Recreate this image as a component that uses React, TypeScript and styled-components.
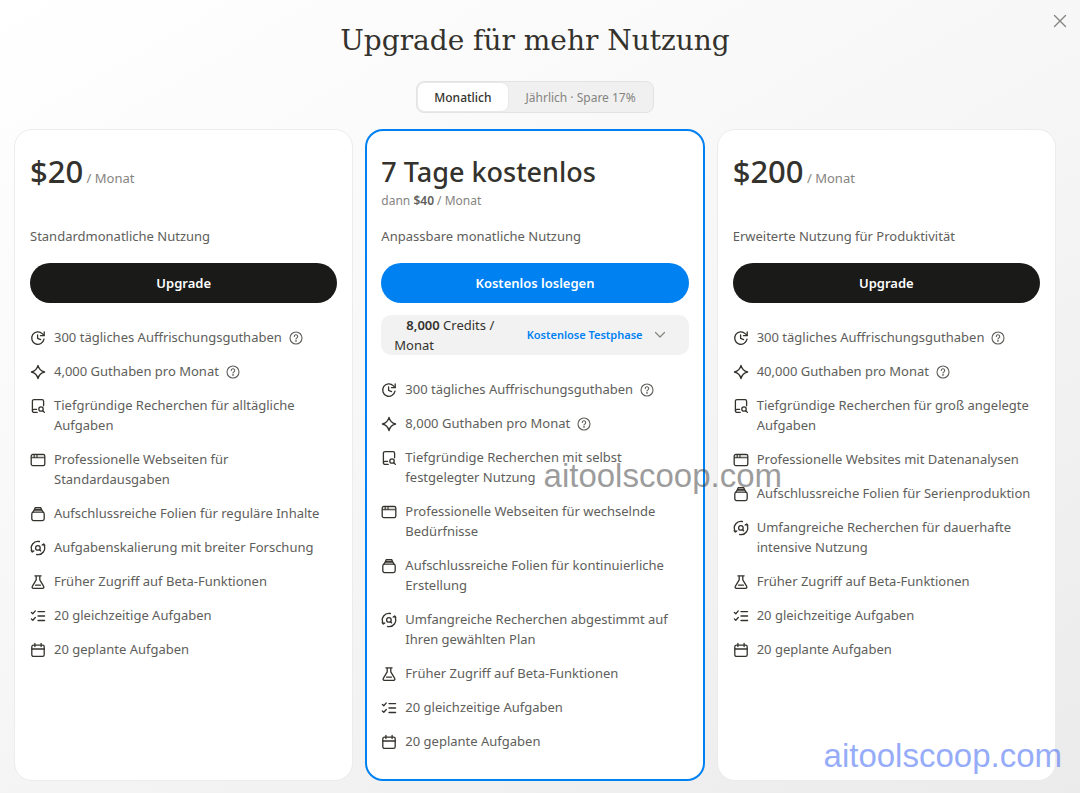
import React, { useState } from "react";
import styled, { createGlobalStyle } from "styled-components";

const GlobalStyle = createGlobalStyle`
  *, *::before, *::after { box-sizing: border-box; }
  html { height: 100%; }
  body {
    margin: 0;
    min-height: 100%;
    background: linear-gradient(150deg, #ffffff 0%, #f7f7f7 45%, #ebebeb 100%);
    color: #34322d;
    font-family: "Noto Sans", "Open Sans", sans-serif;
    font-size: 13px;
    line-height: 20px;
  }
  button, select { font: inherit; cursor: pointer; }
`;

const Page = styled.div`
  position: relative;
  display: flex;
  flex-direction: column;
  align-items: center;
  min-height: 100vh;
  padding: 21px 24px 12px 14px;
`;

const CloseButton = styled.button`
  position: absolute;
  top: 13px;
  right: 12px;
  display: flex;
  padding: 0;
  border: 0;
  background: none;
  color: #858481;
`;

const Title = styled.h1`
  margin: 0;
  font-family: "DejaVu Serif", serif;
  font-size: 28px;
  font-weight: 400;
  line-height: 40px;
`;

const Toggle = styled.div`
  display: flex;
  margin: 20px 0 16px;
  border: 1px solid #e3e3e3;
  border-radius: 8px;
  background: #f0f0f0;
`;

const ToggleOption = styled.button<{ $active: boolean }>`
  height: 30px;
  padding: 1px 16px 0;
  border: 1px solid ${(p) => (p.$active ? "#e9e9e9" : "transparent")};
  border-radius: 8px;
  background: ${(p) => (p.$active ? "#ffffff" : "transparent")};
  color: ${(p) => (p.$active ? "#34322d" : "#858481")};
  font-size: 12px;
  font-weight: ${(p) => (p.$active ? 500 : 400)};
`;

const Plans = styled.main`
  display: grid;
  grid-template-columns: repeat(3, minmax(0, 1fr));
  gap: 12px;
  flex: 1;
  width: 100%;
`;

const Card = styled.section<{ $featured: boolean }>`
  padding: ${(p) => (p.$featured ? "22px 14px 28px" : "23px 15px 29px")};
  border: ${(p) => (p.$featured ? "2px solid #0081f2" : "1px solid #ececec")};
  border-radius: 18px;
  background: #ffffff;
`;

const CardHead = styled.header`
  height: 73px;
`;

const Price = styled.h2<{ $small: boolean }>`
  margin: 0;
  font-size: ${(p) => (p.$small ? 27 : 31)}px;
  font-weight: 500;
  line-height: 37px;
`;

const Period = styled.span`
  color: #858481;
  font-size: 13px;
  font-weight: 400;
`;

const TrialNote = styled.p`
  margin: 0;
  color: #858481;
  font-size: 12px;
  line-height: 22px;
  strong { color: #5e5e5b; font-weight: 600; }
`;

const Description = styled.p`
  margin: 0 0 17px;
  color: #5e5e5b;
`;

const ActionButton = styled.button<{ $featured: boolean }>`
  width: 100%;
  height: 40px;
  border: 0;
  border-radius: 20px;
  background: ${(p) => (p.$featured ? "#0081f2" : "#1a1a19")};
  color: #ffffff;
  font-weight: 600;
`;

const CreditPicker = styled.div`
  position: relative;
  display: flex;
  align-items: center;
  justify-content: space-between;
  height: 40px;
  margin-top: 12px;
  padding: 0 22px 0 13px;
  border-radius: 10px;
  background: #f2f2f2;
`;

const CreditLabel = styled.label`
  width: 120px;
  text-indent: 12px;
  strong { font-weight: 600; }
`;

const CreditSelect = styled.select`
  width: 140px;
  padding: 0;
  border: 0;
  appearance: none;
  background: none;
  color: #0081f2;
  font-size: 11px;
  font-weight: 600;
`;

const SelectArrow = styled.span`
  position: absolute;
  right: 22px;
  display: flex;
  color: #858481;
  pointer-events: none;
`;

const Features = styled.ul`
  display: flex;
  flex-direction: column;
  gap: 14px;
  margin: 24px 0 0;
  padding: 0;
  list-style: none;
`;

const Feature = styled.li`
  display: flex;
  gap: 8px;
  color: #5e5e5b;
  > svg { flex: none; margin-top: 3px; color: #34322d; }
`;

const FeatureText = styled.span`
  display: flex;
  align-items: center;
  gap: 7px;
`;

const HelpButton = styled.button`
  display: flex;
  padding: 1px 0 0;
  border: 0;
  background: none;
  color: #5e5e5b;
`;

const Watermark = styled.span<{ $corner?: boolean }>`
  position: absolute;
  right: ${(p) => (p.$corner ? 18 : 298)}px;
  top: ${(p) => (p.$corner ? 737 : 457)}px;
  color: ${(p) => (p.$corner ? "#4169f5" : "#3c3c3e")};
  font-family: "Liberation Sans", Arial, sans-serif;
  font-size: 33px;
  line-height: 38px;
  opacity: ${(p) => (p.$corner ? 0.55 : 0.5)};
  pointer-events: none;
`;

type IconName = "refresh" | "spark" | "research" | "browser" | "slides" | "wide" | "flask" | "checks" | "calendar";

const drawings: Record<IconName, React.ReactNode> = {
  refresh: (
    <>
      <path d="M14 9.2A6.2 6.2 0 1 1 12.2 3.6L14 5.4" />
      <path d="M14.2 2v3.7h-3.7M7.6 5v3.4l3 1.2" />
    </>
  ),
  spark: <path d="M8 1.4C8.9 5.2 10.8 7.1 14.6 8 10.8 8.9 8.9 10.8 8 14.6 7.1 10.8 5.2 8.9 1.4 8 5.2 7.1 7.1 5.2 8 1.4Z" />,
  research: (
    <>
      <path d="M7.2 14.4H4a1.6 1.6 0 0 1-1.6-1.6V3.2A1.6 1.6 0 0 1 4 1.6h8a1.6 1.6 0 0 1 1.6 1.6v4.6" />
      <path d="M2.4 12.8c0-1 .8-1.5 1.6-1.5h2.6" />
      <circle cx="11" cy="11" r="2.2" />
      <path d="m12.7 12.7 1.7 1.7" />
    </>
  ),
  browser: (
    <>
      <path d="M1.4 5.6V3.8A1.4 1.4 0 0 1 2.8 2.4h10.4a1.4 1.4 0 0 1 1.4 1.4v1.8Z" fill="currentColor" fillOpacity=".2" stroke="none" />
      <rect x="1.2" y="2.4" width="13.6" height="11.2" rx="1.6" />
      <path d="M1.4 5.7h13.2M4.2 2.6v2.8M7 2.6v2.8" strokeWidth="1.1" />
    </>
  ),
  slides: (
    <>
      <rect x="1.8" y="6.2" width="12.4" height="8.4" rx="1.8" />
      <path d="M2.7 6.4 4.4 3.9h7.2l1.7 2.5" />
      <path d="M4.4 3.8 5.2 1.7h5.6l.8 2.1Z" fill="currentColor" fillOpacity=".3" />
    </>
  ),
  wide: (
    <>
      <path d="M9.4 1.5A6.6 6.6 0 0 0 2.2 11.2M6.6 14.5A6.6 6.6 0 0 0 13.8 4.8" />
      <path d="M1.2 10.6 2.3 12l1.5-1.1M14.8 5.4 13.7 4l-1.5 1.1" />
      <circle cx="7.9" cy="7.9" r="2.3" />
      <path d="m9.4 9.5 1.2 1.4" />
    </>
  ),
  flask: (
    <path d="M4.9 1.8h6.2M6.2 1.8v4.1L2.3 12.4a1.2 1.2 0 0 0 1 1.9h9.4a1.2 1.2 0 0 0 1-1.9L9.8 5.9V1.8M5.6 11.2h4.8" />
  ),
  checks: (
    <path d="m1.4 4.4 1.4 1.3 2.5-2.8M1.4 11l1.4 1.3 2.5-2.8M8 3.6h6.6M8 8h6.6M8 12.5h6.6" />
  ),
  calendar: (
    <>
      <rect x="1.8" y="3.2" width="12.4" height="11.2" rx="1.6" />
      <path d="M1.8 7h12.4M4.9 1.5v3M11.1 1.5v3" />
    </>
  ),
};

function Icon({ name }: { name: IconName }) {
  return (
    <svg width="16" height="16" viewBox="0 0 16 16" fill="none" stroke="currentColor" strokeWidth="1.3" strokeLinecap="round" strokeLinejoin="round" aria-hidden="true">
      {drawings[name]}
    </svg>
  );
}

function Help() {
  return (
    <HelpButton type="button" aria-label="Hilfe">
      <svg width="14" height="14" viewBox="0 0 14 14" fill="none" stroke="currentColor" strokeWidth="1.1" strokeLinecap="round" strokeLinejoin="round">
        <circle cx="7" cy="7" r="6" />
        <path d="M5.3 5.5a1.7 1.7 0 1 1 2.5 1.5c-.6.3-.8.5-.8 1" />
        <circle cx="7" cy="9.9" r=".3" fill="currentColor" />
      </svg>
    </HelpButton>
  );
}

interface Plan {
  price: string;
  trial?: boolean;
  description: string;
  action: string;
  features: [IconName, string][];
}

const plans: Plan[] = [
  {
    price: "$20",
    description: "Standardmonatliche Nutzung",
    action: "Upgrade",
    features: [
      ["refresh", "300 tägliches Auffrischungsguthaben"],
      ["spark", "4,000 Guthaben pro Monat"],
      ["research", "Tiefgründige Recherchen für alltägliche Aufgaben"],
      ["browser", "Professionelle Webseiten für Standardausgaben"],
      ["slides", "Aufschlussreiche Folien für reguläre Inhalte"],
      ["wide", "Aufgabenskalierung mit breiter Forschung"],
      ["flask", "Früher Zugriff auf Beta-Funktionen"],
      ["checks", "20 gleichzeitige Aufgaben"],
      ["calendar", "20 geplante Aufgaben"],
    ],
  },
  {
    price: "7 Tage kostenlos",
    trial: true,
    description: "Anpassbare monatliche Nutzung",
    action: "Kostenlos loslegen",
    features: [
      ["refresh", "300 tägliches Auffrischungsguthaben"],
      ["spark", "8,000 Guthaben pro Monat"],
      ["research", "Tiefgründige Recherchen mit selbst festgelegter Nutzung"],
      ["browser", "Professionelle Webseiten für wechselnde Bedürfnisse"],
      ["slides", "Aufschlussreiche Folien für kontinuierliche Erstellung"],
      ["wide", "Umfangreiche Recherchen abgestimmt auf Ihren gewählten Plan"],
      ["flask", "Früher Zugriff auf Beta-Funktionen"],
      ["checks", "20 gleichzeitige Aufgaben"],
      ["calendar", "20 geplante Aufgaben"],
    ],
  },
  {
    price: "$200",
    description: "Erweiterte Nutzung für Produktivität",
    action: "Upgrade",
    features: [
      ["refresh", "300 tägliches Auffrischungsguthaben"],
      ["spark", "40,000 Guthaben pro Monat"],
      ["research", "Tiefgründige Recherchen für groß angelegte Aufgaben"],
      ["browser", "Professionelle Websites mit Datenanalysen"],
      ["slides", "Aufschlussreiche Folien für Serienproduktion"],
      ["wide", "Umfangreiche Recherchen für dauerhafte intensive Nutzung"],
      ["flask", "Früher Zugriff auf Beta-Funktionen"],
      ["checks", "20 gleichzeitige Aufgaben"],
      ["calendar", "20 geplante Aufgaben"],
    ],
  },
];

function PlanCard({ plan }: { plan: Plan }) {
  const trial = !!plan.trial;
  return (
    <Card $featured={trial}>
      <CardHead>
        <Price $small={trial}>
          {plan.price}
          {!trial && <Period> / Monat</Period>}
        </Price>
        {trial && (
          <TrialNote>
            dann <strong>$40</strong> / Monat
          </TrialNote>
        )}
      </CardHead>
      <Description>{plan.description}</Description>
      <ActionButton type="button" $featured={trial}>{plan.action}</ActionButton>
      {trial && (
        <CreditPicker>
          <CreditLabel htmlFor="credits">
            <strong>8,000</strong> Credits / Monat
          </CreditLabel>
          <CreditSelect id="credits">
            <option>Kostenlose Testphase</option>
          </CreditSelect>
          <SelectArrow>
            <svg width="14" height="14" viewBox="0 0 14 14" fill="none" stroke="currentColor" strokeWidth="1.2" strokeLinecap="round" strokeLinejoin="round">
              <path d="m2.5 4.5 4.5 4.5 4.5-4.5" />
            </svg>
          </SelectArrow>
        </CreditPicker>
      )}
      <Features>
        {plan.features.map(([icon, text]) => (
          <Feature key={icon}>
            <Icon name={icon} />
            <FeatureText>
              {text}
              {(icon === "refresh" || icon === "spark") && <Help />}
            </FeatureText>
          </Feature>
        ))}
      </Features>
    </Card>
  );
}

export default function App() {
  const [yearly, setYearly] = useState(false);
  return (
    <>
      <GlobalStyle />
      <Page>
        <CloseButton type="button" aria-label="Schließen">
          <svg width="16" height="16" viewBox="0 0 16 16" fill="none" stroke="currentColor" strokeWidth="1.4" strokeLinecap="round">
            <path d="m2.5 2.5 11 11M13.5 2.5l-11 11" />
          </svg>
        </CloseButton>
        <Title>Upgrade für mehr Nutzung</Title>
        <Toggle>
          <ToggleOption type="button" $active={!yearly} aria-pressed={!yearly} onClick={() => setYearly(false)}>
            Monatlich
          </ToggleOption>
          <ToggleOption type="button" $active={yearly} aria-pressed={yearly} onClick={() => setYearly(true)}>
            Jährlich · Spare 17%
          </ToggleOption>
        </Toggle>
        <Plans>
          {plans.map((plan) => (
            <PlanCard key={plan.price} plan={plan} />
          ))}
        </Plans>
        <Watermark>aitoolscoop.com</Watermark>
        <Watermark $corner>aitoolscoop.com</Watermark>
      </Page>
    </>
  );
}
